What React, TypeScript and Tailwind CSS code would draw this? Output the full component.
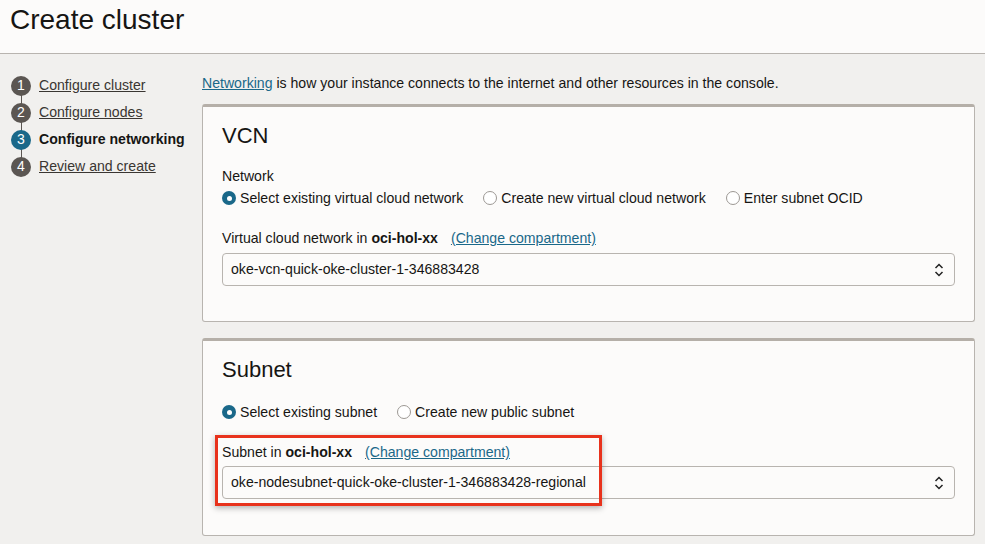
import React from 'react';

const steps = [
  { n: 1, label: 'Configure cluster' },
  { n: 2, label: 'Configure nodes' },
  { n: 3, label: 'Configure networking', active: true },
  { n: 4, label: 'Review and create' },
];

function Radio({ checked, label }: { checked?: boolean; label: string }) {
  return (
    <label className="flex items-center gap-[4px]">
      {checked ? (
        <span className="w-[14px] h-[14px] rounded-full bg-[#1a6889] flex items-center justify-center">
          <span className="w-[5px] h-[5px] rounded-full bg-white" />
        </span>
      ) : (
        <span className="w-[14px] h-[14px] rounded-full border border-[#9c9894] bg-white" />
      )}
      <span>{label}</span>
    </label>
  );
}

function Select({ value }: { value: string }) {
  return (
    <div className="h-[33px] w-[733px] border border-[#b8b4af] rounded-[4px] bg-[#fcfbfa] flex items-center justify-between pl-[8px] pr-[10px]">
      <span>{value}</span>
      <svg width="10" height="16" viewBox="0 0 10 16" fill="none" stroke="#222" strokeWidth="1.5">
        <path d="M1.5 6 L5 2.5 L8.5 6" />
        <path d="M1.5 10 L5 13.5 L8.5 10" />
      </svg>
    </div>
  );
}

function CompartmentLabel({ prefix }: { prefix: string }) {
  return (
    <div className="flex items-center h-[18px]">
      <span>{prefix} <b>oci-hol-xx</b></span>
      <a className="ml-[13px] text-[#1a6889] underline">(Change compartment)</a>
    </div>
  );
}

export default function App() {
  return (
    <div className="w-[985px] h-[544px] overflow-hidden bg-[#f1f0ee] text-[14.1px] text-[#161513] font-['Liberation_Sans',Arial,sans-serif]">
      {/* Header */}
      <div className="h-[54px] bg-[#fcfbfa] border-b border-[#b8b4af] pl-[10px] pt-[2px]">
        <h1 className="text-[28px] leading-[36px] text-[#161513]">Create cluster</h1>
      </div>

      <div className="flex">
        {/* Steps */}
        <div className="w-[202px] shrink-0 pl-[11px] pt-[18px]">
          {steps.map((s, i) => (
            <div key={s.n} className="flex items-center gap-[8px] h-[27px] relative">
              {i < steps.length - 1 && (
                <span className="absolute left-[9.5px] top-[18px] w-[1px] h-[18px] bg-[#5b5652]" />
              )}
              <span
                className={`relative w-[20px] h-[20px] rounded-full flex items-center justify-center text-white text-[14px] ${
                  s.active ? 'bg-[#1a6889]' : 'bg-[#5b5652]'
                }`}
              >
                {s.n}
              </span>
              <span className={s.active ? 'font-bold' : 'underline text-[#3a3632]'}>{s.label}</span>
            </div>
          ))}
        </div>

        {/* Content */}
        <div className="flex-1 pr-[10px] pt-[20px]">
          <p className="leading-[18px]">
            <a className="text-[#1a6889] underline">Networking</a> is how your instance connects to the internet and other resources in the console.
          </p>

          {/* VCN card */}
          <div className="mt-[12px] h-[218px] bg-[#fcfbfa] border border-[#b8b4af] border-t-[3px] border-t-[#b5afa8] rounded-[3px] pl-[19px] pt-[14px]">
            <h2 className="text-[22px] leading-[30px]">VCN</h2>
            <div className="mt-[16px] leading-[18px]">Network</div>
            <div className="mt-[4px] flex gap-[20px] leading-[18px]">
              <Radio checked label="Select existing virtual cloud network" />
              <Radio label="Create new virtual cloud network" />
              <Radio label="Enter subnet OCID" />
            </div>
            <div className="mt-[23px]">
              <CompartmentLabel prefix="Virtual cloud network in" />
            </div>
            <div className="mt-[5px]">
              <Select value="oke-vcn-quick-oke-cluster-1-346883428" />
            </div>
          </div>

          {/* Subnet card */}
          <div className="mt-[16px] h-[198px] bg-[#fcfbfa] border border-[#b8b4af] border-t-[3px] border-t-[#b5afa8] rounded-[3px] pl-[19px] pt-[14px]">
            <h2 className="text-[22px] leading-[30px]">Subnet</h2>
            <div className="mt-[18px] flex gap-[20px] leading-[18px]">
              <Radio checked label="Select existing subnet" />
              <Radio label="Create new public subnet" />
            </div>
            <div className="relative mt-[23px]">
              <div className="absolute left-[-7px] top-[-9px] w-[387px] h-[71px] border-[3px] border-[#e8321c] shadow-[0_2px_6px_rgba(0,0,0,0.3)] pointer-events-none z-10" />
              <CompartmentLabel prefix="Subnet in" />
              <div className="mt-[4px]">
                <Select value="oke-nodesubnet-quick-oke-cluster-1-346883428-regional" />
              </div>
            </div>
          </div>
        </div>
      </div>
    </div>
  );
}
